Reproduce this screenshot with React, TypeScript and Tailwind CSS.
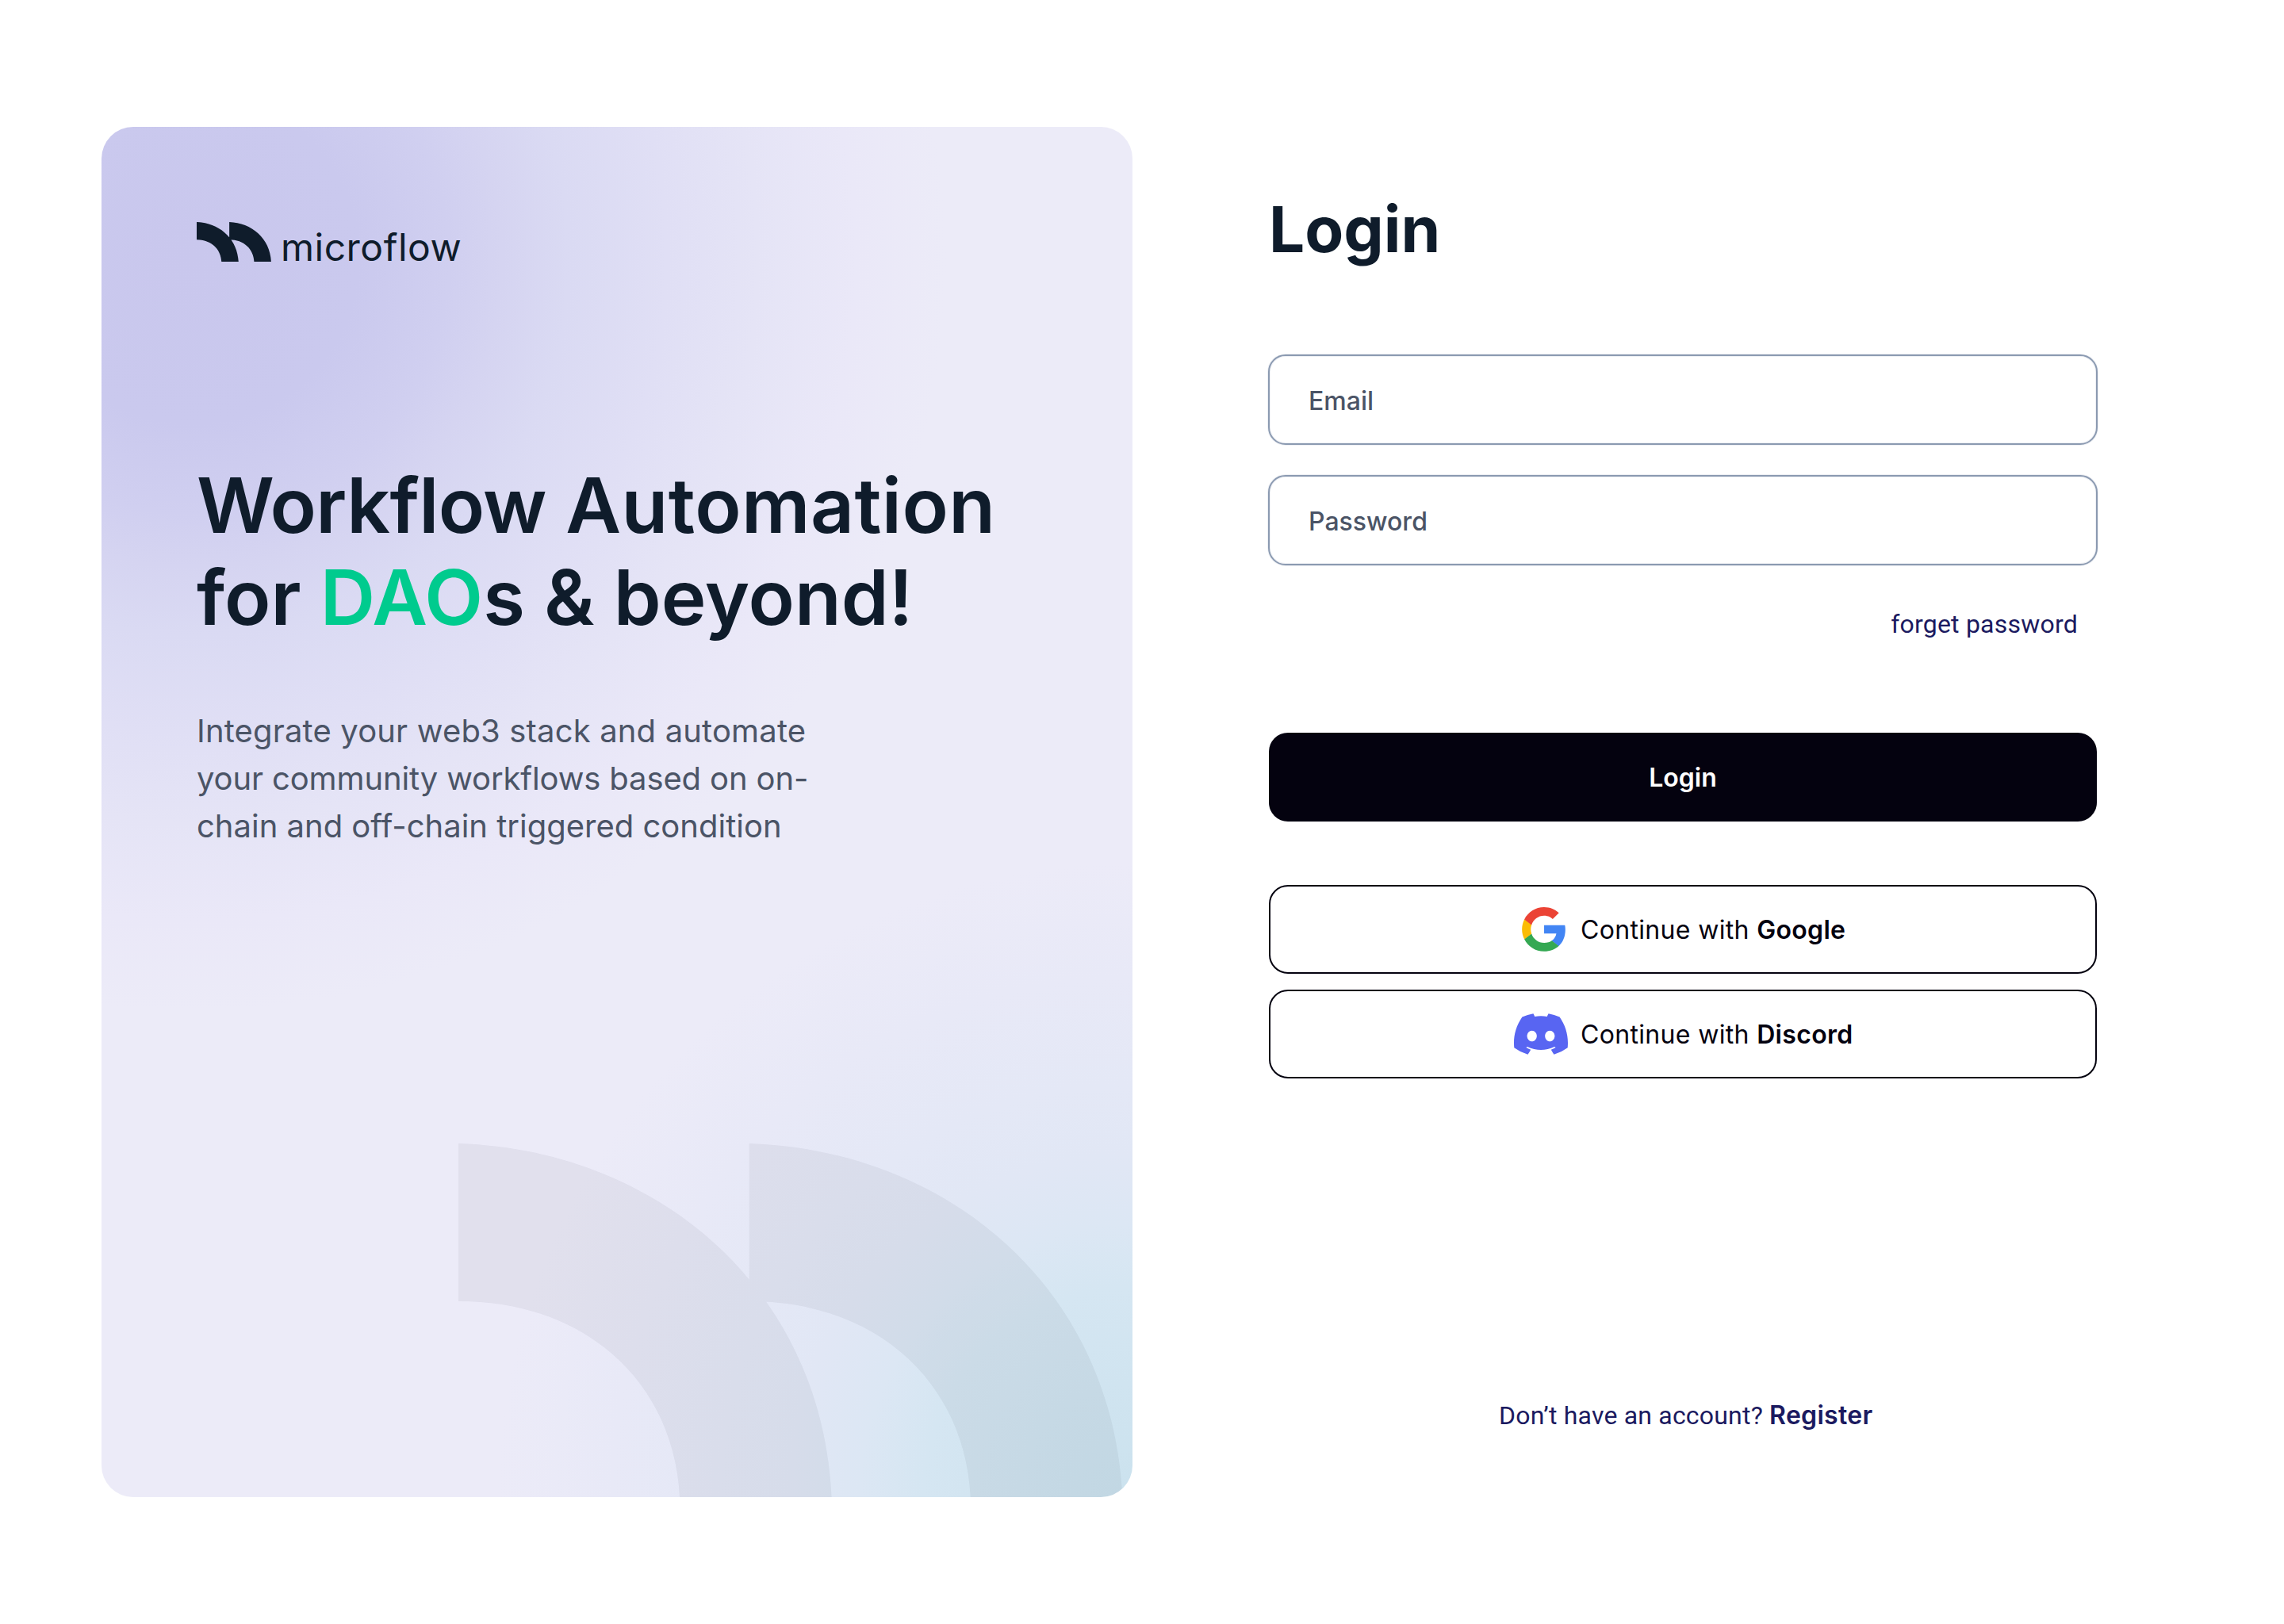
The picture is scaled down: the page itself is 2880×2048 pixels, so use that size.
import React, { useState } from 'react';
import { clsx } from 'clsx';

interface FieldProps {
  type: string;
  label: string;
  value: string;
  onChange: (value: string) => void;
}

interface SocialButtonProps {
  icon: React.ReactNode;
  provider: string;
  className?: string;
}

// Single arch of the brand mark, the mark is two of them side by side
const ARCH = 'M0 0C250 8 458 182 470.6 446H279C272 305 165 199 0 199Z';

function Mark({ className }: { className?: string }) {
  return (
    <svg viewBox="0 0 838 446" preserveAspectRatio="none" className={className} fill="currentColor">
      <path d={`${ARCH}M366.7 0C616.7 8 824.7 182 837.3 446H645.7C638.7 305 531.7 199 366.7 199Z`} />
    </svg>
  );
}

function GoogleIcon() {
  return (
    <svg viewBox="0 0 256 262" className="h-14 w-[55px]">
      <path fill="#4285F4" d="M255.878 133.451c0-10.734-.871-18.567-2.756-26.69H130.55v48.448h71.947c-1.45 12.04-9.283 30.172-26.69 42.356l-.244 1.622 38.755 30.023 2.685.268c24.659-22.774 38.875-56.282 38.875-96.027" />
      <path fill="#34A853" d="M130.55 261.1c35.248 0 64.839-11.605 86.453-31.622l-41.196-31.913c-11.024 7.688-25.82 13.055-45.257 13.055-34.523 0-63.824-22.773-74.269-54.25l-1.531.13-40.298 31.187-.527 1.465C35.393 231.798 79.49 261.1 130.55 261.1" />
      <path fill="#FBBC05" d="M56.281 156.37c-2.756-8.123-4.351-16.827-4.351-25.82 0-8.994 1.595-17.697 4.206-25.82l-.073-1.73L15.26 71.312l-1.335.635C5.077 89.644 0 109.517 0 130.55s5.077 40.905 13.925 58.602l42.356-32.782" />
      <path fill="#EB4335" d="M130.55 50.479c24.514 0 41.05 10.589 50.479 19.438l36.844-35.974C195.245 12.91 165.798 0 130.55 0 79.49 0 35.393 29.301 13.925 71.947l42.211 32.783c10.59-31.477 39.891-54.251 74.414-54.251" />
    </svg>
  );
}

function DiscordIcon() {
  return (
    <svg viewBox="0 0 127.14 96.36" className="h-[52px] w-[68px]" fill="#5865F2">
      <path d="M107.7 8.07A105.15 105.15 0 0 0 81.47 0a72.06 72.06 0 0 0-3.36 6.83 97.68 97.68 0 0 0-29.11 0A72.37 72.37 0 0 0 45.64 0a105.89 105.89 0 0 0-26.25 8.09C2.79 32.65-1.71 56.6.54 80.21a105.73 105.73 0 0 0 32.17 16.15 77.7 77.7 0 0 0 6.89-11.11 68.42 68.42 0 0 1-10.85-5.18c.91-.66 1.8-1.34 2.66-2a75.57 75.57 0 0 0 64.32 0c.87.71 1.76 1.39 2.66 2a68.68 68.68 0 0 1-10.87 5.19 77 77 0 0 0 6.89 11.1 105.25 105.25 0 0 0 32.19-16.14c2.64-27.38-4.51-51.11-18.9-72.15ZM42.45 65.69C36.18 65.69 31 60 31 53s5-12.74 11.43-12.74S54 46 53.89 53s-5.05 12.69-11.44 12.69Zm42.24 0C78.41 65.69 73.25 60 73.25 53s5-12.74 11.44-12.74S96.23 46 96.12 53s-5.04 12.69-11.43 12.69Z" />
    </svg>
  );
}

function Field({ type, label, value, onChange }: FieldProps) {
  return (
    <input
      type={type}
      placeholder={label}
      aria-label={label}
      value={value}
      onChange={(e) => onChange(e.target.value)}
      className="block h-[114px] w-full rounded-[22px] border-2 border-[#8b9ab1] bg-white px-[49px] pt-[3px] text-[32px] font-medium text-[#0f1c2b] shadow-[0_0_0_1px_#8d9cb426,inset_0_0_0_1px_#8d9cb426] outline-none placeholder:text-[#4b5466]"
    />
  );
}

function SocialButton({ icon, provider, className }: SocialButtonProps) {
  return (
    <button
      type="button"
      className={clsx('flex h-28 w-full items-center rounded-3xl border-2 border-[#04020f] text-[32px] tracking-[0.33px] text-[#04020f]', className)}
    >
      {icon}
      <span className="pt-[2px]">
        Continue with <span className="font-semibold">{provider}</span>
      </span>
    </button>
  );
}

export default function App() {
  const [email, setEmail] = useState('');
  const [password, setPassword] = useState('');

  return (
    <div className="flex h-[2048px] w-[2880px] bg-white py-40 pl-32 font-['Inter',sans-serif]">
      {/* Brand panel */}
      <section className="relative h-[1728px] w-[1300px] overflow-hidden rounded-[40px] bg-[#ecebf8] bg-[radial-gradient(circle_950px_at_115px_165px,#c9c7ed_0%,#cac9ee_22%,#d0cff0_34%,#d5d4f1_41%,#dadaf3_50%,#e0dff5_63%,#e5e4f6_75%,#eae8f8_88%,#ecebf800_100%),radial-gradient(circle_800px_at_1300px_1728px,#cbe2ee_0%,#d0e4f0_18%,#d5e6f2_33%,#dce7f4_43%,#e1e7f5_54%,#e4e8f6_65%,#e8e9f7_82%,#ecebf8_100%)] pl-[120px] text-[#0f1c2b]">
        <Mark className="absolute bottom-0 left-[450px] h-[446px] w-[838px] text-[#0f1c2b]/5" />
        <div className="relative flex items-start pt-[120px]">
          <Mark className="h-[50px] w-[94px]" />
          <span className="mt-[2px] ml-[12px] text-[48px] leading-[60px] tracking-[0.5px]">microflow</span>
        </div>
        <h1 className="relative mt-[237px] text-[96px] leading-[116px] font-semibold">
          <span className="tracking-[-0.6px]">Workflow</span> <span className="tracking-[0.45px]">Automation</span>
          <br />
          for <span className="text-[#00cb8e]">DAO</span>s &amp; beyond!
        </h1>
        <p className="relative mt-[81px] w-[800px] text-[40px] leading-[60px] text-[#4b5466]">
          <span className="tracking-[0.16px]">Integrate your web3 stack and automate</span>
          <br />
          <span className="tracking-[-0.13px]">your community workflows based on on-</span>
          <br />
          chain and off-chain triggered condition
        </p>
      </section>

      {/* Login form */}
      <main className="ml-[171px] flex w-[1046px] flex-col">
        <h2 className="mt-[80px] ml-px text-[80px] leading-[97px] font-bold text-[#0f1c2b]">Login</h2>
        <form className="mt-[110px] flex flex-col gap-[38px]" onSubmit={(e) => e.preventDefault()}>
          <Field type="email" label="Email" value={email} onChange={setEmail} />
          <Field type="password" label="Password" value={password} onChange={setPassword} />
          <a href="#" className="mt-[17px] mr-[25px] self-end font-['Roboto',sans-serif] text-[32px] leading-[38px] tracking-[0.22px] text-[#1b1a60]">
            forget password
          </a>
          <button type="submit" className="mx-px mt-[80px] h-28 rounded-3xl bg-[#04020f] pt-[2px] text-[32px] font-semibold text-white">
            Login
          </button>
        </form>
        <div className="mx-px mt-20 flex flex-col gap-5">
          <SocialButton icon={<GoogleIcon />} provider="Google" className="gap-[19px] pl-[317px]" />
          <SocialButton icon={<DiscordIcon />} provider="Discord" className="gap-[16px] pl-[307px]" />
        </div>
        <p className="mt-[406px] ml-[291px] font-['Roboto',sans-serif] text-[32px] leading-[38px] tracking-[0.2px] text-[#1b1a60]">
          Don’t have an account? <a href="#" className="font-['Inter',sans-serif] font-semibold tracking-[0.3px]">Register</a>
        </p>
      </main>
    </div>
  );
}
